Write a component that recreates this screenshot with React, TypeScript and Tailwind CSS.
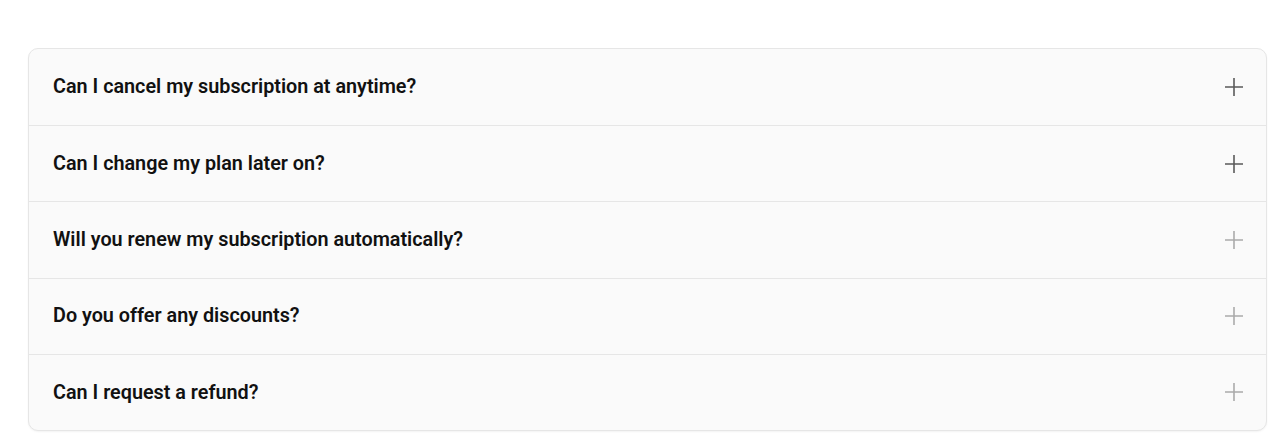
const faqs = [
  { q: 'Can I cancel my subscription at anytime?', dim: false },
  { q: 'Can I change my plan later on?', dim: false },
  { q: 'Will you renew my subscription automatically?', dim: true },
  { q: 'Do you offer any discounts?', dim: true },
  { q: 'Can I request a refund?', dim: true },
];

const PlusIcon = ({ className }: { className?: string }) => (
  <svg className={className} width="18" height="18" viewBox="0 0 18 18" fill="none" stroke="currentColor" strokeWidth={1.6}>
    <path d="M9 0v18M0 9h18" />
  </svg>
);

export default function App() {
  return (
    <div className="min-h-screen bg-white pt-[48px] pl-[28px] pr-[13px]" style={{ fontFamily: 'Roboto, "Noto Sans", sans-serif' }}>
      <div className="rounded-[10px] border border-[#e6e6e6] bg-[#fafafa] shadow-[0_1px_2px_rgba(0,0,0,0.05)] overflow-hidden">
        {faqs.map((item, i) => (
          <button
            key={i}
            className={`flex h-[76.2px] w-full items-center justify-between pl-6 pr-[23px] text-left ${i > 0 ? 'border-t border-[#e6e6e6]' : ''}`}
          >
            <span className="text-[19.8px] font-semibold text-[#111111]">{item.q}</span>
            <PlusIcon className={item.dim ? 'text-[#ababab]' : 'text-[#5a5a5a]'} />
          </button>
        ))}
      </div>
    </div>
  );
}
